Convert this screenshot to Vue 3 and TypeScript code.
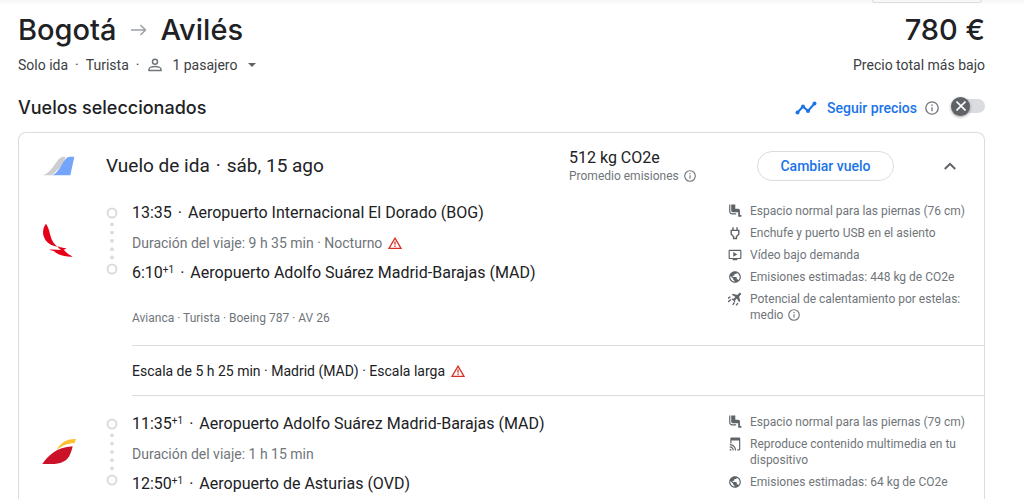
<script setup lang="ts">
import { ref } from 'vue'

type AmenityIcon = 'seat' | 'power' | 'video' | 'globe' | 'contrail' | 'cast'

interface Amenity {
  icon: AmenityIcon
  text: string
  info?: boolean
}

interface Stop {
  time: string
  plus?: string
  airport: string
}

interface Leg {
  id: string
  logo: 'avianca' | 'iberia'
  from: Stop
  to: Stop
  duration: string
  warning: boolean
  details: string
  amenities: Amenity[]
  layover?: string
}

const tracking = ref(false)
const expanded = ref(true)
const passengers = ref('1 pasajero')

const iconPaths: Record<Exclude<AmenityIcon, 'contrail' | 'power'>, string> = {
  seat: 'M2 1h2v12c0 1.700 1.300 3 3 3h7v2H7c-2.800 0-5-2.200-5-5zM5.500 1h7v7h5c1.700 0 3 1.300 3 3v8H23v3h-5.500v-8H8c-1.400 0-2.500-1.100-2.500-2.500z',
  video:
    'M21 3H3c-1.110 0-2 .89-2 2v12c0 1.100.89 2 2 2h5v2h8v-2h5c1.100 0 1.990-.9 1.990-2L23 5c0-1.110-.9-2-2-2zm0 14H3V5h18v12zM16 11l-7 4V7z',
  globe:
    'M12 2C6.480 2 2 6.480 2 12s4.480 10 10 10 10-4.480 10-10S17.520 2 12 2zm-1 17.930c-3.950-.49-7-3.850-7-7.930 0-.62.080-1.210.210-1.790L9 15v1c0 1.100.9 2 2 2v1.930zm6.900-2.540c-.26-.81-1-1.390-1.900-1.390h-1v-3c0-.55-.45-1-1-1H8v-2h2c.55 0 1-.45 1-1V7h2c1.100 0 2-.9 2-2v-.41c2.930 1.190 5 4.060 5 7.410 0 2.080-.8 3.970-2.100 5.390z',
  cast: 'M5 1h14c1.100 0 2 .9 2 2v18c0 1.100-.9 2-2 2h-3v-2h3V6H6v5H4V2zM3 20v3h3c0-1.660-1.340-3-3-3zm0-4v2c2.760 0 5 2.240 5 5h2c0-3.870-3.130-7-7-7zm0-4v2c4.970 0 9 4.030 9 9h2c0-6.080-4.930-11-11-11z',
}

const legs: Leg[] = [
  {
    id: 'av26',
    logo: 'avianca',
    from: { time: '13:35', airport: 'Aeropuerto Internacional El Dorado (BOG)' },
    to: { time: '6:10', plus: '+1', airport: 'Aeropuerto Adolfo Suárez Madrid-Barajas (MAD)' },
    duration: 'Duración del viaje: 9 h 35 min · Nocturno',
    warning: true,
    details: 'Avianca · Turista · Boeing 787 · AV 26',
    amenities: [
      { icon: 'seat', text: 'Espacio normal para las piernas (76 cm)' },
      { icon: 'power', text: 'Enchufe y puerto USB en el asiento' },
      { icon: 'video', text: 'Vídeo bajo demanda' },
      { icon: 'globe', text: 'Emisiones estimadas: 448 kg de CO2e' },
      { icon: 'contrail', text: 'Potencial de calentamiento por estelas: medio', info: true },
    ],
    layover: 'Escala de 5 h 25 min · Madrid (MAD) · Escala larga',
  },
  {
    id: 'ib',
    logo: 'iberia',
    from: { time: '11:35', plus: '+1', airport: 'Aeropuerto Adolfo Suárez Madrid-Barajas (MAD)' },
    to: { time: '12:50', plus: '+1', airport: 'Aeropuerto de Asturias (OVD)' },
    duration: 'Duración del viaje: 1 h 15 min',
    warning: false,
    details: '',
    amenities: [
      { icon: 'seat', text: 'Espacio normal para las piernas (79 cm)' },
      { icon: 'cast', text: 'Reproduce contenido multimedia en tu dispositivo' },
      { icon: 'globe', text: 'Emisiones estimadas: 64 kg de CO2e' },
    ],
  },
]
</script>

<template>
  <div class="page">
    <div class="topbar"><div class="pill"></div></div>

    <header>
      <div class="line">
        <h1 class="route">
          <span>Bogotá</span>
          <svg class="arrow" viewBox="0 0 16 12" aria-label="a">
            <path d="M0 6h14.500M9.500 1l5 5-5 5" fill="none" stroke="#9aa0a6" stroke-width="1.500" />
          </svg>
          <span>Avilés</span>
        </h1>
        <div class="price">780 €</div>
      </div>
      <div class="line sub">
        <div class="facts">
          <span>Solo ida</span><span class="dot">·</span><span>Turista</span><span class="dot">·</span>
          <label class="passengers">
            <svg class="person" viewBox="0 0 14 14" aria-hidden="true">
              <circle cx="7" cy="3.700" r="2.500" />
              <path d="M1 12.500v-1.300C1 9.500 4.500 8.600 7 8.600s6 .9 6 2.600v1.300z" />
            </svg>
            <select v-model="passengers" aria-label="Pasajeros">
              <option>1 pasajero</option>
            </select>
            <svg class="caret" viewBox="0 0 8 4" aria-hidden="true"><path d="M0 0h8L4 4z" /></svg>
          </label>
        </div>
        <div>Precio total más bajo</div>
      </div>
    </header>

    <div class="line section">
      <h2>Vuelos seleccionados</h2>
      <div class="track">
        <svg class="trend" viewBox="0 0 22 14" aria-hidden="true">
          <path d="M2.500 11.500l5.500-6 5 4.500 6.500-7.500" fill="none" stroke="#1a73e8" stroke-width="2" />
          <g fill="#1a73e8">
            <circle cx="2.500" cy="11.500" r="2" /><circle cx="8" cy="5.500" r="2" />
            <circle cx="13" cy="10" r="2" /><circle cx="19.500" cy="2.500" r="2" />
          </g>
        </svg>
        <label for="track-prices">Seguir precios</label>
        <svg class="info" viewBox="0 0 14 14" aria-hidden="true">
          <circle cx="7" cy="7" r="6.200" /><path d="M7 6.200v4M7 3.600v1.300" />
        </svg>
        <span class="toggle">
          <input id="track-prices" v-model="tracking" type="checkbox" role="switch" />
          <span class="thumb">
            <svg viewBox="0 0 10 10" aria-hidden="true"><path d="M.5.5l9 9M9.500.5l-9 9" /></svg>
          </span>
        </span>
      </div>
    </div>

    <section class="card">
      <div class="card-head">
        <svg class="tail" viewBox="126 92 99 60" aria-hidden="true">
          <path d="M129 150c14-5 22-14 32-28 12-17 18-28 29-28h6l-4 20-36 36z" fill="#ccced1" />
          <path d="M157 150c12-6 18-15 26-28 11-18 16-28 28-28h12l-12 56z" fill="#74a4fb" />
        </svg>
        <h3>Vuelo de ida<span class="dot">·</span>sáb, 15 ago</h3>
        <div class="emissions">
          <div class="kg">512 kg CO2e</div>
          <div class="avg">
            Promedio emisiones
            <svg class="info small" viewBox="0 0 14 14" aria-hidden="true">
              <circle cx="7" cy="7" r="6.200" /><path d="M7 6.200v4M7 3.600v1.300" />
            </svg>
          </div>
        </div>
        <button type="button" class="change">Cambiar vuelo</button>
        <button
          type="button"
          class="chevron"
          :aria-expanded="expanded"
          aria-label="Detalles del vuelo"
          @click="expanded = !expanded"
        >
          <svg viewBox="0 0 12 8"><path d="M.8 7L6 1.800 11.200 7" /></svg>
        </button>
      </div>

      <template v-if="expanded">
        <template v-for="leg in legs" :key="leg.id">
          <article class="leg">
            <div class="logo">
              <svg v-if="leg.logo === 'avianca'" class="avianca" viewBox="126 292 96 105" aria-label="Avianca">
                <g fill="#e50019">
                  <path d="M138 294c-9 11-11 27-6 40 6 17 21 26 41 29-14-9-20-25-24-42-2-10-6-19-11-27z" />
                  <path d="M172 361c9 4 17 6 27 7-2 2-5 4-8 4 8 9 16 15 27 21-21 1-42-4-57-17l-14-4c13-1 24 0 37 1-6-3-9-7-12-12z" />
                </g>
              </svg>
              <svg v-else class="iberia" viewBox="123 476 105 81" aria-label="Iberia">
                <path d="M124 554c16-23 42-51 91-53-5 22-12 43-35 49-18 5-37 4-56 4z" fill="#cb1229" />
                <path d="M166 512c12-20 30-34 59-33-2 5-3 9-5 13-21 0-38 8-54 20z" fill="#fdc02f" />
              </svg>
            </div>

            <svg class="timeline" viewBox="0 0 12 68" aria-hidden="true">
              <g fill="none" stroke="#dadce0" stroke-width="2">
                <circle cx="6" cy="6" r="4.500" /><circle cx="6" cy="62" r="4.500" />
              </g>
              <g fill="#dadce0">
                <circle v-for="n in 5" :key="n" cx="6" :cy="9 + n * 8.300" r="1.900" />
              </g>
            </svg>

            <div class="stops">
              <div class="stop">
                {{ leg.from.time }}<sup v-if="leg.from.plus">{{ leg.from.plus }}</sup
                ><span class="dot">·</span>{{ leg.from.airport }}
              </div>
              <div class="duration">
                {{ leg.duration }}
                <svg v-if="leg.warning" class="warn" viewBox="0 0 14 12" aria-label="Aviso">
                  <path d="M7 1.200L13 11.300H1z" /><path d="M7 4.500v3.200M7 8.600v1.400" />
                </svg>
              </div>
              <div class="stop">
                {{ leg.to.time }}<sup v-if="leg.to.plus">{{ leg.to.plus }}</sup
                ><span class="dot">·</span>{{ leg.to.airport }}
              </div>
              <div v-if="leg.details" class="details">{{ leg.details }}</div>
            </div>

            <ul class="amenities">
              <li v-for="item in leg.amenities" :key="item.text">
                <svg class="aicon" viewBox="0 0 24 24" aria-hidden="true">
                  <g v-if="item.icon === 'power'" fill="none" stroke="currentColor" stroke-width="2.400">
                    <path d="M8.500 2v6M15.500 2v6M5.500 7.500h13v6.500l-4 4v3.500h-5v-3.500l-4-4z" />
                  </g>
                  <g v-else-if="item.icon === 'contrail'">
                    <path d="M22 2c1 1 .6 2-.2 2.900L19 7.700l2 8-2 1.500-3.800-6.200-3 3 .3 2.500-1.500 1.300-1.600-3.400L6 12.800l1.300-1.500 2.500.3 3-3L6.600 4.800 8.100 3l8 2 2.900-2.800C20 1.300 21 1 22 2z" />
                    <path d="M0 11l4-3M0 17l5-4M8 22l3-4M14 23l3-4" fill="none" stroke="currentColor" stroke-width="2.200" />
                  </g>
                  <path v-else :d="iconPaths[item.icon]" />
                </svg>
                <span>
                  {{ item.text }}
                  <svg v-if="item.info" class="info small" viewBox="0 0 14 14" aria-hidden="true">
                    <circle cx="7" cy="7" r="6.200" /><path d="M7 6.200v4M7 3.600v1.300" />
                  </svg>
                </span>
              </li>
            </ul>
          </article>

          <div v-if="leg.layover" class="layover">
            {{ leg.layover }}
            <svg class="warn" viewBox="0 0 14 12" aria-label="Aviso">
              <path d="M7 1.200L13 11.300H1z" /><path d="M7 4.500v3.200M7 8.600v1.400" />
            </svg>
          </div>
        </template>
      </template>
    </section>
  </div>
</template>

<style>
body {
  background: #fff;
}
</style>

<style scoped>
.page {
  box-sizing: border-box;
  height: 100vh;
  overflow: hidden;
  display: flex;
  flex-direction: column;
  padding: 0 39px 0 18px;
  font-family: Roboto, 'Liberation Sans', sans-serif;
  font-size: 14px;
  line-height: 20px;
  color: #202124;
  background: linear-gradient(#f6f6f6, #fff 5px);
}

h1,
h2,
h3,
ul {
  margin: 0;
  padding: 0;
}

svg {
  display: block;
  flex: none;
}

.topbar {
  flex: none;
  display: flex;
  justify-content: flex-end;
  height: 10px;
}

.pill {
  box-sizing: border-box;
  width: 110px;
  height: 3px;
  margin-right: 3px;
  border: 1px solid #dadce0;
  border-top: 0;
  border-radius: 0 0 12px 12px;
}

.line {
  display: flex;
  align-items: center;
  justify-content: space-between;
}

.route {
  display: flex;
  align-items: center;
  gap: 14px;
}

.route,
.price {
  font-family: Inter, Roboto, sans-serif;
  font-size: 29px;
  line-height: 40px;
  font-weight: 500;
}

.arrow {
  width: 16px;
  height: 12px;
}

.sub {
  margin-top: 5px;
  color: #3c4043;
}

.facts,
.passengers {
  display: flex;
  align-items: center;
}

.dot {
  margin: 0 6px;
}

.facts .dot {
  margin: 0 7px;
}

.person {
  width: 14px;
  height: 14px;
  margin: 0 10px 0 2px;
  fill: none;
  stroke: #70757a;
  stroke-width: 1.5;
}

select {
  appearance: none;
  padding: 0;
  border: 0;
  background: none;
  font: inherit;
  color: inherit;
}

.caret {
  width: 8px;
  height: 4px;
  margin-left: 10px;
  fill: #5f6368;
}

.section {
  margin-top: 17px;
  height: 32px;
}

h2 {
  font-family: Inter, Roboto, sans-serif;
  font-size: 18px;
  line-height: 24px;
  font-weight: 500;
}

.track {
  display: flex;
  align-items: center;
}

.track label {
  margin: 0 8px 0 10px;
  font-weight: 500;
  color: #1a73e8;
}

.trend {
  width: 22px;
  height: 14px;
}

.info {
  width: 14px;
  height: 14px;
  fill: none;
  stroke: #70757a;
  stroke-width: 1.3;
}

.info.small {
  display: inline-block;
  width: 12px;
  height: 12px;
  margin-left: 2px;
  vertical-align: -2px;
}

.toggle {
  position: relative;
  display: flex;
  align-items: center;
  margin: 0 0 4px 12px;
}

.toggle input {
  appearance: none;
  width: 34px;
  height: 14px;
  margin: 0;
  border-radius: 7px;
  background: #dadce0;
}

.thumb {
  position: absolute;
  left: 0;
  display: flex;
  align-items: center;
  justify-content: center;
  width: 19px;
  height: 19px;
  border-radius: 50%;
  background: #5f6368;
  box-shadow: 0 1px 3px rgba(0, 0, 0, 0.4);
  pointer-events: none;
}

.thumb svg {
  width: 10px;
  height: 10px;
  fill: none;
  stroke: #fff;
  stroke-width: 1.6;
}

.toggle input:checked + .thumb {
  left: auto;
  right: 0;
  background: #1a73e8;
}

.card {
  flex: 1;
  min-height: 0;
  margin-top: 8px;
  border: 1px solid #dadce0;
  border-bottom: 0;
  border-radius: 8px 8px 0 0;
}

.card-head {
  display: grid;
  grid-template-columns: 64px 1fr 188px 137px 69px;
  align-items: center;
  height: 38px;
  padding: 14px 21px 0 23px;
}

.tail {
  width: 33px;
  height: 20px;
}

h3 {
  font-size: 19px;
  line-height: 24px;
  font-weight: 400;
}

.kg {
  font-size: 16px;
  line-height: 20px;
}

.avg {
  font-size: 12px;
  line-height: 16px;
  color: #70757a;
}

.change {
  height: 30px;
  padding: 0;
  border: 1px solid #dadce0;
  border-radius: 15px;
  background: #fff;
  font: 500 14px/20px Roboto, 'Liberation Sans', sans-serif;
  color: #1a73e8;
}

.chevron {
  display: flex;
  align-items: center;
  justify-content: center;
  width: 24px;
  height: 24px;
  margin-left: 44px;
  padding: 0;
  border: 0;
  background: none;
}

.chevron svg {
  width: 12px;
  height: 8px;
  fill: none;
  stroke: #5f6368;
  stroke-width: 2;
}

.leg {
  display: grid;
  grid-template-columns: 64px 26px 1fr 240px;
  align-items: start;
  padding: 16px 16px 19px 23px;
}

.logo {
  display: flex;
  align-items: center;
  height: 78px;
}

.avianca {
  width: 32px;
  height: 35px;
}

.iberia {
  width: 35px;
  height: 27px;
}

.timeline {
  width: 12px;
  height: 68px;
  margin-top: 6px;
}

.stop {
  font-size: 16px;
  line-height: 24px;
}

.stop sup {
  font-size: 10px;
  line-height: 10px;
  vertical-align: 5px;
}

.duration {
  display: flex;
  align-items: center;
  gap: 6px;
  margin: 8px 0;
  color: #70757a;
}

.warn {
  width: 14px;
  height: 12px;
  fill: none;
  stroke: #d93025;
  stroke-width: 1.3;
}

.details {
  margin-top: 25px;
  font-size: 12px;
  line-height: 16px;
  color: #70757a;
}

.amenities {
  display: grid;
  gap: 6px;
  padding-top: 2px;
  list-style: none;
  font-size: 12px;
  line-height: 16px;
  color: #70757a;
}

.amenities li {
  display: flex;
  gap: 8px;
}

.aicon {
  width: 14px;
  height: 14px;
  margin-top: 1px;
  fill: currentColor;
  color: #5f6368;
}

.layover {
  display: flex;
  align-items: center;
  gap: 6px;
  height: 49px;
  margin-left: 113px;
  border-top: 1px solid #dadce0;
  border-bottom: 1px solid #dadce0;
}
</style>
